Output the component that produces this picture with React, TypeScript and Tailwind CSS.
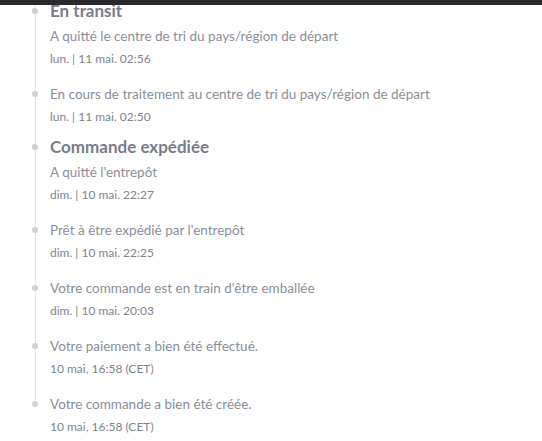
import React from 'react';

type Step = {
  title?: string;
  text: string;
  date: string;
};

const steps: Step[] = [
  { title: 'En transit', text: 'A quitté le centre de tri du pays/région de départ', date: 'lun. | 11 mai. 02:56' },
  { text: 'En cours de traitement au centre de tri du pays/région de départ', date: 'lun. | 11 mai. 02:50' },
  { title: 'Commande expédiée', text: "A quitté l'entrepôt", date: 'dim. | 10 mai. 22:27' },
  { text: "Prêt à être expédié par l'entrepôt", date: 'dim. | 10 mai. 22:25' },
  { text: "Votre commande est en train d'être emballée", date: 'dim. | 10 mai. 20:03' },
  { text: 'Votre paiement a bien été effectué.', date: '10 mai, 16:58 (CET)' },
  { text: 'Votre commande a bien été créée.', date: '10 mai, 16:58 (CET)' },
];

// One row of the tracking timeline: dot + rail on the left, texts on the right
const TimelineItem = ({ step, last }: { step: Step; last: boolean }) => (
  <div className="flex">
    <div className="flex w-[14px] flex-col items-center">
      <div className={step.title ? 'h-[3px] w-px bg-[#e4e4e4]' : 'h-[8px] w-px bg-[#e4e4e4]'} />
      <div className="h-[6px] w-[6px] rounded-full bg-[#d2d2d2]" />
      {!last && <div className="w-px flex-1 bg-[#e4e4e4]" />}
    </div>
    <div className={last ? 'ml-[8px] flex-1' : 'ml-[8px] flex-1 pb-[15px]'}>
      {step.title && (
        <div className="-mt-[2px] -mb-[1px] text-[17px] font-bold leading-[16px] text-[#7a7d89]">{step.title}</div>
      )}
      <div className={step.title ? 'mt-[7px] text-[13.5px] leading-[22px] text-[#8b8e98]' : 'text-[13.5px] leading-[22px] text-[#8b8e98]'}>
        {step.text}
      </div>
      <div className="mt-[3px] text-[12px] leading-[18px] text-[#80838d]">{step.date}</div>
    </div>
  </div>
);

export default function App() {
  return (
    <div className="min-h-[441px] w-full bg-white" style={{ fontFamily: 'Lato, "Noto Sans", sans-serif' }}>
      <div className="relative z-10 h-[5px] w-full bg-[#2a2a2e]" />
      <div className="pl-[28px]">
        {steps.map((s, i) => (
          <TimelineItem key={i} step={s} last={i === steps.length - 1} />
        ))}
      </div>
    </div>
  );
}
